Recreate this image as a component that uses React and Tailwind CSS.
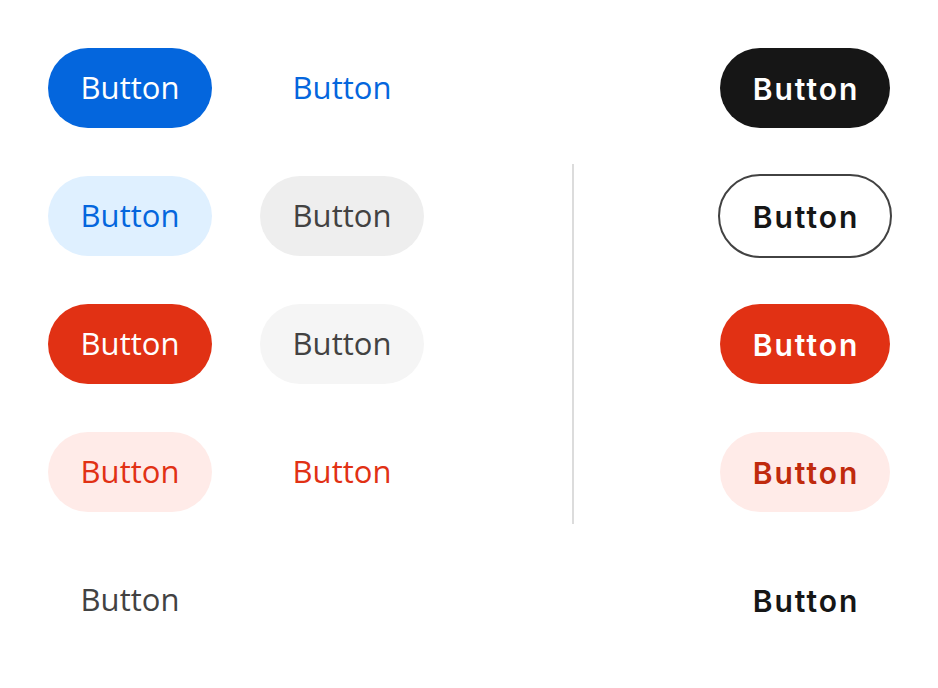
function Pill({ className, children }) {
  return (
    <button
      className={`h-20 w-[164px] rounded-full flex items-center justify-center pb-[2px] text-[31px] font-['Open_Sans',sans-serif] ${className}`}
    >
      {children}
    </button>
  );
}

function StrongPill({ className, children }) {
  return (
    <button
      className={`w-[170px] shrink-0 rounded-full flex items-center justify-center pl-[2px] pt-[2px] text-[30px] tracking-[2px] font-semibold font-['Inter',sans-serif] ${className}`}
    >
      {children}
    </button>
  );
}

export default function App() {
  return (
    <div className="w-[938px] h-[688px] bg-white p-12 flex justify-between">
      {/* Left two columns */}
      <div className="grid grid-cols-[164px_164px] gap-x-12 gap-y-12 auto-rows-[80px]">
        <Pill className="bg-[#0466dd] text-white">Button</Pill>
        <Pill className="text-[#0466dd]">Button</Pill>
        <Pill className="bg-[#dff0ff] text-[#0466dd]">Button</Pill>
        <Pill className="bg-[#eeeeee] text-[#424242]">Button</Pill>
        <Pill className="bg-[#e13114] text-white">Button</Pill>
        <Pill className="bg-[#f5f5f5] text-[#424242]">Button</Pill>
        <Pill className="bg-[#ffebe8] text-[#e13114]">Button</Pill>
        <Pill className="text-[#e13114]">Button</Pill>
        <Pill className="text-[#424242]">Button</Pill>
      </div>

      {/* Divider */}
      <div className="ml-[2px] mt-[116px] h-[360px] w-[2px] bg-[#dcdcdc]" />

      {/* Right column */}
      <div className="w-[170px] flex flex-col items-center gap-12">
        <div className="h-20 flex items-center">
          <StrongPill className="h-20 bg-[#161616] text-white">Button</StrongPill>
        </div>
        <div className="h-20 flex items-center">
          <StrongPill className="h-[84px] w-[174px] border-2 border-[#424242] bg-white text-[#161616]">Button</StrongPill>
        </div>
        <div className="h-20 flex items-center">
          <StrongPill className="h-20 bg-[#e13114] text-white">Button</StrongPill>
        </div>
        <div className="h-20 flex items-center">
          <StrongPill className="h-20 bg-[#ffebe8] text-[#c02a0d]">Button</StrongPill>
        </div>
        <div className="h-20 flex items-center">
          <StrongPill className="h-20 text-[#161616]">Button</StrongPill>
        </div>
      </div>
    </div>
  );
}
